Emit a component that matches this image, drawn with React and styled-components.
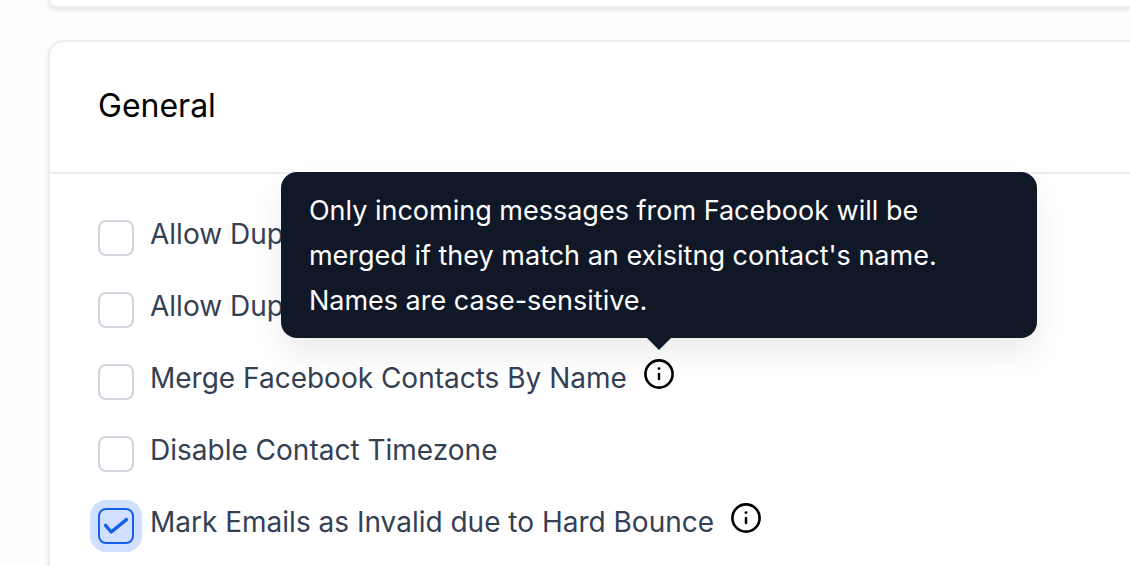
import React, { useState } from "react";
import styled, { createGlobalStyle } from "styled-components";

const OPTIONS = [
  { id: "duplicate-contact", label: "Allow Dup" },
  { id: "duplicate-opportunity", label: "Allow Dup" },
  {
    id: "merge-facebook",
    label: "Merge Facebook Contacts By Name",
    hint: "Only incoming messages from Facebook will be merged if they match an exisitng contact's name. Names are case-sensitive.",
    hintOpen: true,
  },
  { id: "disable-timezone", label: "Disable Contact Timezone" },
  {
    id: "hard-bounce",
    label: "Mark Emails as Invalid due to Hard Bounce",
    info: true,
  },
];

const InfoIcon = () => (
  <svg width="30" height="30" viewBox="0 0 30 30" fill="none" aria-hidden="true">
    <circle cx="15" cy="15" r="13.6" stroke="#000" strokeWidth="2.6" />
    <circle cx="15" cy="9.6" r="1.4" fill="#000" />
    <path d="M15 14.9V20.1" stroke="#000" strokeWidth="2.5" strokeLinecap="round" />
  </svg>
);

const CheckIcon = () => (
  <svg width="36" height="36" viewBox="0 0 36 36" fill="none" aria-hidden="true">
    <path
      d="M7.6 17.4L13.2 24L28.4 11.6"
      stroke="#155eef"
      strokeWidth="3.4"
      strokeLinecap="round"
      strokeLinejoin="round"
    />
  </svg>
);

const OptionRow = ({ option, checked, focused, onToggle }) => (
  <Row>
    <CheckboxCell>
      <Checkbox
        type="checkbox"
        id={option.id}
        checked={checked}
        $focused={focused}
        onChange={() => onToggle(option.id)}
      />
      {checked && <CheckIcon />}
    </CheckboxCell>
    <Label htmlFor={option.id}>{option.label}</Label>
    {(option.hint || option.info) && (
      <InfoButton type="button" aria-label={`About: ${option.label}`}>
        <InfoIcon />
        {option.hintOpen && <Tooltip role="tooltip">{option.hint}</Tooltip>}
      </InfoButton>
    )}
  </Row>
);

const App = () => {
  const [selected, setSelected] = useState(["hard-bounce"]);
  const [lastToggled, setLastToggled] = useState("hard-bounce");

  const handleToggle = (id) => {
    setLastToggled(id);
    setSelected((prev) =>
      prev.includes(id) ? prev.filter((item) => item !== id) : [...prev, id]
    );
  };

  return (
    <>
      <GlobalStyle />
      <Page>
        <PreviousCard />
        <Card>
          <CardHeader>
            <Title>General</Title>
          </CardHeader>
          <CardBody>
            {OPTIONS.map((option) => (
              <OptionRow
                key={option.id}
                option={option}
                checked={selected.includes(option.id)}
                focused={lastToggled === option.id}
                onToggle={handleToggle}
              />
            ))}
          </CardBody>
        </Card>
      </Page>
    </>
  );
};

const GlobalStyle = createGlobalStyle`
  * {
    box-sizing: border-box;
  }
  body {
    margin: 0;
    background: #fcfdfd;
    font-family: Inter, "Liberation Sans", sans-serif;
  }
`;

const Page = styled.main`
  display: flex;
  flex-direction: column;
  gap: 32px;
  height: 100vh;
  padding-left: 48px;
  overflow: hidden;
`;

const Card = styled.section`
  flex: none;
  background: #fff;
  border: 2px solid #eaecf0;
  border-right: none;
  border-radius: 16px 0 0 16px;
  box-shadow: 0 2px 4px rgba(16, 24, 40, 0.1);
`;

const PreviousCard = styled(Card)`
  height: 8px;
  border-top: none;
  border-radius: 0 0 0 16px;
`;

const CardHeader = styled.header`
  padding: 40px 48px 42px;
  border-bottom: 2px solid #eaecf0;
`;

const Title = styled.h2`
  margin: 0;
  color: #000;
  font-size: 32px;
  font-weight: 400;
  line-height: 48px;
`;

const CardBody = styled.div`
  display: flex;
  flex-direction: column;
  gap: 32px;
  padding: 40px 48px;
`;

const Row = styled.div`
  display: flex;
  align-items: flex-start;
  height: 40px;
`;

const CheckboxCell = styled.div`
  position: relative;
  flex: none;
  width: 36px;
  height: 36px;
  margin: 6px 16px 0 0;

  svg {
    position: absolute;
    inset: 0;
    pointer-events: none;
  }
`;

const Checkbox = styled.input`
  appearance: none;
  display: block;
  width: 36px;
  height: 36px;
  margin: 0;
  background: #fff;
  border: 2px solid #d0d5dd;
  border-radius: 8px;
  cursor: pointer;

  &:checked {
    background: #d1e0ff;
    border-color: #155eef;
    box-shadow: ${({ $focused }) => ($focused ? "0 0 0 8px #d1e0ff" : "none")};
  }
`;

const Label = styled.label`
  color: #344054;
  font-size: 28px;
  line-height: 40px;
  white-space: nowrap;
`;

const InfoButton = styled.button`
  position: relative;
  display: flex;
  margin: 1px 0 0 17px;
  padding: 0;
  background: none;
  border: none;
  font-family: inherit;
  cursor: pointer;
`;

const Tooltip = styled.span`
  position: absolute;
  bottom: calc(100% + 21px);
  left: 50%;
  z-index: 1;
  width: 756px;
  padding: 16px 28px 15px;
  background: #101828;
  border-radius: 16px;
  box-shadow: 0 16px 32px rgba(0, 0, 0, 0.08);
  color: #fff;
  font-size: 27px;
  line-height: 45px;
  text-align: left;
  transform: translateX(-50%);

  &::after {
    content: "";
    position: absolute;
    top: 100%;
    left: 50%;
    border: 12px solid transparent;
    border-top-color: #101828;
    border-bottom: none;
    transform: translateX(-50%);
  }
`;

export default App;
